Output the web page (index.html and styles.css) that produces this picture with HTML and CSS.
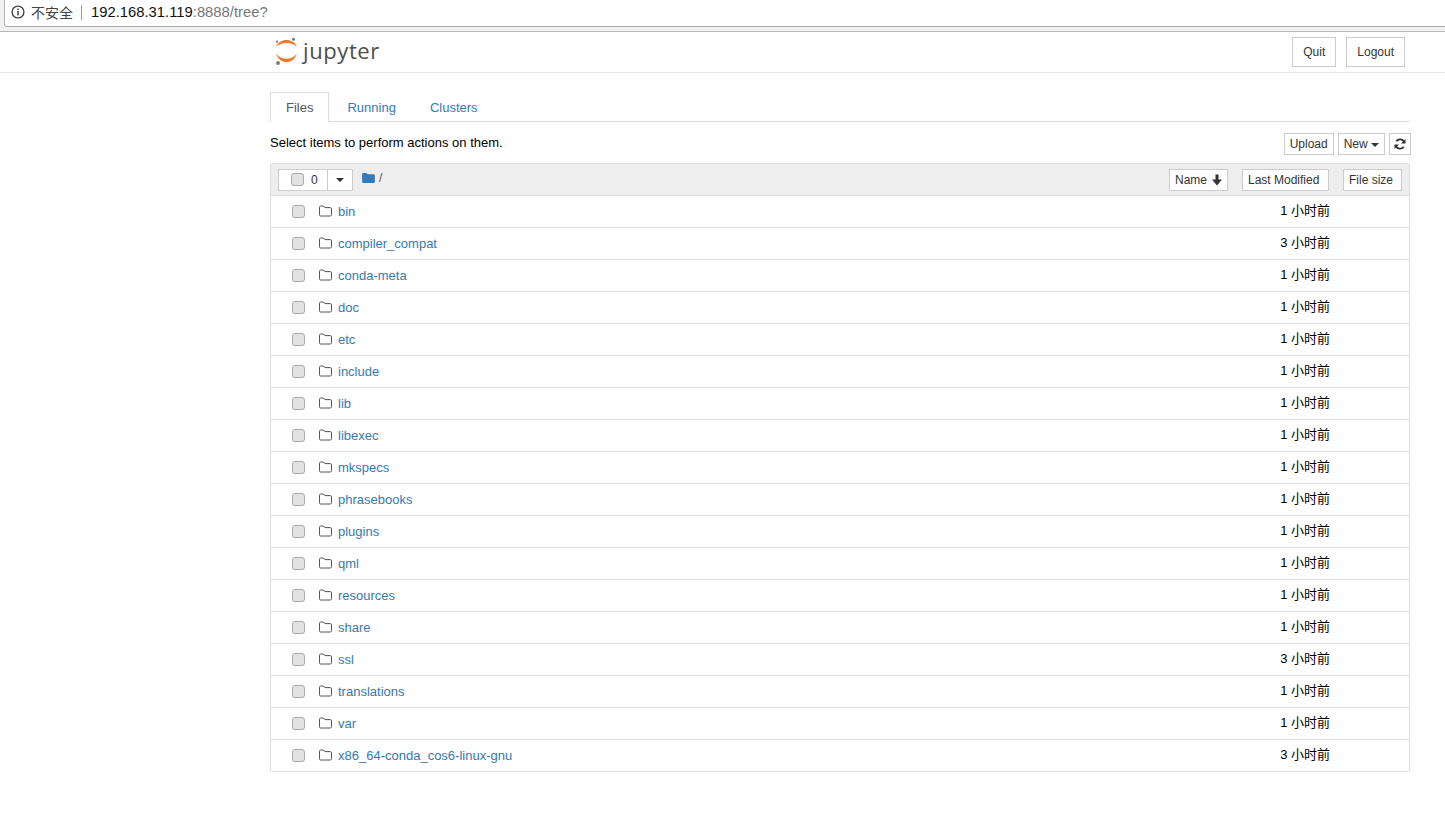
FILE: index.html
```html
<!DOCTYPE html>
<html lang="en">
  <head>
    <meta charset="UTF-8" />
    <title>Home</title>
    <link rel="stylesheet" href="styles.css">
  </head>
  <body>
    <div class="chrome">
      <div class="urlbar">
        <svg class="info" width="14" height="14" viewBox="0 0 14 14">
          <circle cx="7" cy="7" r="5.9" fill="none" stroke="#444" stroke-width="1.4"/>
          <rect x="6.3" y="6" width="1.5" height="4.4" fill="#444"/>
          <rect x="6.3" y="3.5" width="1.5" height="1.5" fill="#444"/>
        </svg>
        <span class="secure">不安全</span>
        <span class="sep"></span>
        <span class="host">192.168.31.119</span><span class="path">:8888/tree?</span>
      </div>
    </div>

    <header class="site_head">
      <div class="container head_in">
        <div class="logo">
          <svg width="24" height="30" viewBox="0 0 24 30">
            <circle cx="19.500" cy="3.200" r="1.500" fill="#767677"/>
            <circle cx="3" cy="5.700" r="1.100" fill="#767677"/>
            <circle cx="4" cy="27" r="1.900" fill="#767677"/>
            <path d="M2 11C4 6 8 4 12.500 4S21 6 23 11C20.500 8.200 16.500 7 12.500 7S4.500 8.200 2 11z" fill="#f37726"/>
            <path d="M2 17.500C4 23.500 8 26 12.500 26S21 23.500 23 17.500C20.500 21 16.500 22.700 12.500 22.700S4.500 21 2 17.500z" fill="#f37726"/>
          </svg>
          <span class="logo_text">jupyter</span>
        </div>
        <div class="head_btns">
          <button class="btn btn_head">Quit</button>
          <button class="btn btn_head">Logout</button>
        </div>
      </div>
    </header>

    <div class="container main">
      <ul class="tabs">
        <li class="tab on">Files</li>
        <li class="tab">Running</li>
        <li class="tab">Clusters</li>
      </ul>

      <div class="toolbar">
        <span class="hint">Select items to perform actions on them.</span>
        <div class="tool_btns">
          <button class="btn">Upload</button>
          <button class="btn">New <i class="caret"></i></button>
          <button class="btn btn_refresh">
            <svg width="12" height="12" viewBox="0 0 12 12">
              <path d="M10.300 4.600A4.500 4.500 0 0 0 2.300 3.300" fill="none" stroke="#333" stroke-width="1.800"/>
              <path d="M1.700 7.400A4.500 4.500 0 0 0 9.700 8.700" fill="none" stroke="#333" stroke-width="1.800"/>
              <path d="M11.500 1V5.500H7zM.5 11V6.500H5z" fill="#333"/>
            </svg>
          </button>
        </div>
      </div>

      <div class="list">
        <div class="list_head">
          <div class="select_box">
            <span class="select_main"><i class="check"></i><b>0</b></span>
            <span class="select_drop"><i class="caret"></i></span>
          </div>
          <svg class="crumb" width="13" height="10" viewBox="0 0 14 11">
            <path d="M0 1.500C0 .6.600 0 1.400 0H4.800L6 1.500H12.500C13.400 1.500 14 2.100 14 2.900V9.500C14 10.400 13.400 11 12.500 11H1.400C.6 11 0 10.400 0 9.500z" fill="#337ab7"/>
          </svg>
          <span class="crumb_sep">/</span>
          <div class="sort_btns">
            <button class="btn btn_sort sort_name">Name
              <svg width="12" height="12" viewBox="0 0 12 12"><path d="M4.500 .5H7.500V5.500H11L6 11.500 1 5.500H4.500z" fill="#333"/></svg>
            </button>
            <button class="btn btn_sort sort_time">Last Modified</button>
            <button class="btn btn_sort sort_size">File size</button>
          </div>
        </div>
        <div id="rows"></div>
      </div>
    </div>

    <script>
      let folders = [
        ["bin", 1], ["compiler_compat", 3], ["conda-meta", 1], ["doc", 1], ["etc", 1],
        ["include", 1], ["lib", 1], ["libexec", 1], ["mkspecs", 1], ["phrasebooks", 1],
        ["plugins", 1], ["qml", 1], ["resources", 1], ["share", 1], ["ssl", 3],
        ["translations", 1], ["var", 1], ["x86_64-conda_cos6-linux-gnu", 3],
      ];
      let $rows = document.querySelector("#rows");
      folders.forEach((folder) => {
        let row = document.createElement("div");
        row.className = "row";
        row.innerHTML =
          '<i class="check"></i>' +
          '<svg class="folder" width="13" height="12" viewBox="0 0 13 12">' +
          '<path d="M.5 2.300C.5 1.500 1 1 1.700 1H4.500L5.700 2.600H11.200C12 2.600 12.500 3.100 12.500 3.900V9.700C12.500 10.500 12 11 11.200 11H1.700C1 11 .5 10.500 .5 9.700z" fill="none" stroke="#555" stroke-width="1"/></svg>' +
          '<a class="name">' + folder[0] + "</a>" +
          '<span class="time">' + folder[1] + " 小时前</span>";
        $rows.appendChild(row);
      });
    </script>
  </body>
</html>
```

FILE: styles.css
```css
* {
  box-sizing: border-box;
}

body {
  margin: 0;
  background: #fff;
  color: #000;
  font-family: "Liberation Sans", "Noto Sans CJK SC", sans-serif;
  font-size: 13px;
}

.chrome {
  height: 32px;
  background: #f2f2f2;
  border-bottom: 1px solid #b5b5b5;
}

.urlbar {
  display: flex;
  align-items: center;
  height: 27px;
  margin-left: 4px;
  padding: 0 0 2px 6px;
  background: #fff;
  border-left: 1px solid #b5b5b5;
  border-bottom: 1px solid #a9a9a9;
  border-bottom-left-radius: 3px;
  font-size: 14.800px;
}

.secure {
  margin-left: 6px;
  color: #444;
  font-size: 14px;
}

.sep {
  width: 1px;
  height: 15px;
  margin: 0 9px 0 8px;
  background: #999;
}

.host {
  color: #111;
}

.path {
  color: #777;
}

.container {
  width: 1140px;
  margin-left: 270px;
}

.site_head {
  height: 41px;
  border-bottom: 1px solid #e7e7e7;
}

.head_in {
  display: flex;
  justify-content: space-between;
  height: 40px;
}

.logo {
  display: flex;
  align-items: center;
  padding: 0 0 2px 4px;
}

.logo_text {
  margin: -3px 0 0 5px;
  color: #4e4e4e;
  font-family: "Open Sans", sans-serif;
  font-size: 22px;
  letter-spacing: 0.6px;
  line-height: 30px;
}

.head_btns {
  display: flex;
  gap: 10px;
  margin-right: 5px;
  padding-top: 5px;
}

.btn {
  height: 24px;
  padding: 0 5px;
  background: #fff;
  border: 1px solid #ccc;
  color: #333;
  font-family: inherit;
  font-size: 12px;
}

.btn_head {
  height: 30px;
  padding: 0 10px;
}

.main {
  padding-top: 19px;
}

.tabs {
  display: flex;
  height: 30px;
  margin: 0;
  padding: 0;
  list-style: none;
  border-bottom: 1px solid #ddd;
}

.tab {
  height: 30px;
  padding: 7px 15px 0 15px;
  margin-right: 2px;
  border: 1px solid transparent;
  border-bottom: 0;
  color: #337ab7;
  line-height: 16px;
}

.tab.on {
  height: 30px;
  background: #fff;
  border-color: #ddd;
  color: #555;
}

.toolbar {
  display: flex;
  justify-content: space-between;
  height: 41px;
  padding-top: 11px;
}

.hint {
  line-height: 19px;
}

.tool_btns {
  display: flex;
  gap: 4px;
  margin-right: -1px;
}

.tool_btns .btn {
  height: 22px;
}

.btn_refresh {
  display: flex;
  align-items: center;
  width: 22px;
  padding: 0 4px;
}

.caret {
  display: inline-block;
  width: 0;
  height: 0;
  vertical-align: middle;
  border-top: 4px solid #333;
  border-left: 4px solid transparent;
  border-right: 4px solid transparent;
}

.list {
  border: 1px solid #ddd;
  border-radius: 2px;
}

.list_head {
  display: flex;
  align-items: center;
  height: 32px;
  padding: 0 7px;
  background: #eee;
  border-bottom: 1px solid #ddd;
}

.select_box {
  display: flex;
  height: 22px;
  background: #fff;
  border: 1px solid #ccc;
  color: #333;
  font-size: 12px;
}

.select_main {
  display: flex;
  align-items: center;
  width: 49px;
  padding-left: 12px;
  border-right: 1px solid #ccc;
}

.select_main b {
  margin-left: 7px;
  font-weight: normal;
}

.select_drop {
  display: flex;
  align-items: center;
  justify-content: center;
  width: 24px;
}

.check {
  display: block;
  width: 13px;
  height: 13px;
  background: #e2e2e2;
  border: 1px solid #aaa;
  border-radius: 3px;
}

.crumb {
  margin: -3px 0 0 9px;
}

.crumb_sep {
  margin: -3px 0 0 4px;
  color: #555;
  font-size: 12px;
}

.sort_btns {
  display: flex;
  gap: 14px;
  margin-left: auto;
}

.btn_sort {
  display: flex;
  align-items: center;
  gap: 4px;
  height: 22px;
  padding: 0 0 0 5px;
}

.sort_name {
  width: 59px;
}

.sort_time {
  width: 87px;
}

.sort_size {
  width: 59px;
}

.row {
  display: flex;
  align-items: center;
  height: 32px;
  padding-left: 21px;
  border-bottom: 1px solid #ddd;
}

.row:last-child {
  border-bottom: 0;
  height: 31px;
}

.folder {
  margin-left: 14px;
  margin-top: -2px;
}

.name {
  margin-left: 6px;
  color: #337ab7;
}

.time {
  margin-left: auto;
  margin-right: 79px;
  margin-top: -4px;
}
```
